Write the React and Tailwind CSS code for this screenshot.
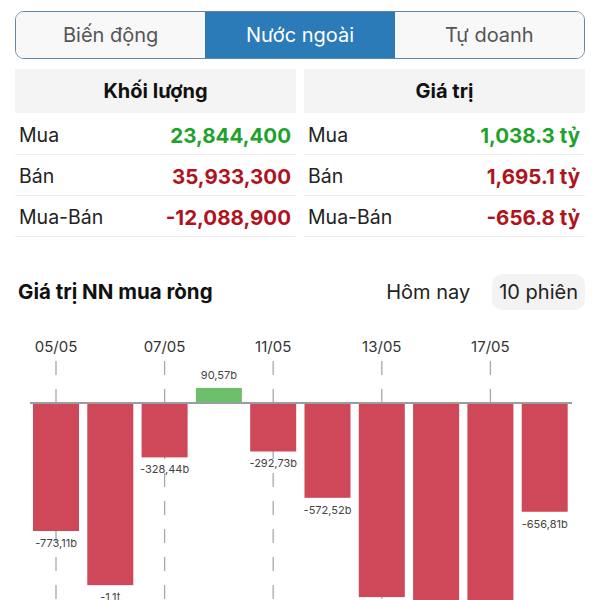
import { useState } from "react";

const tabs = ["Biến động", "Nước ngoài", "Tự doanh"];

const volumeRows = [
    { label: "Mua", value: "23,844,400", up: true },
    { label: "Bán", value: "35,933,300", up: false },
    { label: "Mua-Bán", value: "-12,088,900", up: false },
];

const valueRows = [
    { label: "Mua", value: "1,038.3 tỷ", up: true },
    { label: "Bán", value: "1,695.1 tỷ", up: false },
    { label: "Mua-Bán", value: "-656.8 tỷ", up: false },
];

const sessions = [
    { date: "05/05", v: -773.11, label: "-773,11b" },
    { date: "", v: -1100, label: "-1,1t" },
    { date: "07/05", v: -328.44, label: "-328,44b" },
    { date: "", v: 90.57, label: "90,57b" },
    { date: "11/05", v: -292.73, label: "-292,73b" },
    { date: "", v: -572.52, label: "-572,52b" },
    { date: "13/05", v: -1172, label: "-1,17t" },
    { date: "", v: -1320, label: "-1,32t" },
    { date: "17/05", v: -1290, label: "-1,29t" },
    { date: "", v: -656.81, label: "-656,81b" },
];

const AXIS_Y = 403;
const SCALE = 0.1656;
const BAR_W = 46;
const PITCH = 54.3;

const StatTable = ({ title, rows }) => (
    <div>
        <div className="h-[44px] mb-[1px] bg-[#f4f4f4] flex items-center justify-center text-[20px] font-bold text-[#111]">
            {title}
        </div>
        {rows.map((row) => (
            <div
                key={row.label}
                className="h-[41px] pt-[4px] border-b border-[#ededed] flex items-center justify-between pl-[4px] pr-[5px] text-[19.5px]"
            >
                <span className="text-[#222]">{row.label}</span>
                <span className={`text-[20.5px] font-bold ${row.up ? "text-[#1fa22c]" : "text-[#b01320]"}`}>
                    {row.value}
                </span>
            </div>
        ))}
    </div>
);

const NetChart = () => (
    <svg width="600" height="290" viewBox="0 310 600 290" className="block">
        {/* date labels and dashed grid */}
        {sessions.map((s, i) =>
            s.date ? (
                <g key={"g" + i}>
                    <text
                        x={33 + i * PITCH + BAR_W / 2}
                        y={352}
                        textAnchor="middle"
                        fontSize="15"
                        fill="#333"
                    >
                        {s.date}
                    </text>
                    <line
                        x1={33 + i * PITCH + BAR_W / 2}
                        x2={33 + i * PITCH + BAR_W / 2}
                        y1={361}
                        y2={600}
                        stroke="#a9a9a9"
                        strokeWidth="1.3"
                        strokeDasharray="14 14"
                    />
                </g>
            ) : null
        )}

        {sessions.map((s, i) => {
            const x = 33 + i * PITCH;
            const h = Math.abs(s.v) * SCALE;
            const up = s.v > 0;
            const labelY = up ? AXIS_Y - h - 9 : AXIS_Y + h + 16;
            return (
                <g key={"b" + i}>
                    <rect
                        x={x}
                        y={up ? AXIS_Y - h : AXIS_Y}
                        width={BAR_W}
                        height={h}
                        fill={up ? "#6cbf6b" : "#cf4859"}
                    />
                    {labelY < 606 && (
                        <text x={x + BAR_W / 2} y={labelY} textAnchor="middle" fontSize="11" fill="#444">
                            {s.label}
                        </text>
                    )}
                </g>
            );
        })}

        <line x1="30" x2="572" y1={AXIS_Y} y2={AXIS_Y} stroke="#9c9c9c" strokeWidth="2" />
    </svg>
);

const App = () => {
    const [tab, setTab] = useState(1);
    const [range, setRange] = useState("10");

    return (
        <div className="w-[600px] h-[600px] overflow-hidden bg-white font-['Inter',sans-serif]">
            <div className="px-[15px] pt-[11px]">
                {/* Tabs */}
                <div className="flex h-[48px] border border-[#5f87a6] rounded-[9px] overflow-hidden">
                    {tabs.map((t, i) => (
                        <button
                            key={t}
                            onClick={() => setTab(i)}
                            className={`flex-1 text-[20px] ${
                                tab === i ? "bg-[#2b7bb9] text-white" : "bg-[#f8f8f8] text-[#555]"
                            }`}
                        >
                            {t}
                        </button>
                    ))}
                </div>

                {/* Summary tables */}
                <div className="mt-[10px] grid grid-cols-2 gap-x-[8px]">
                    <StatTable title="Khối lượng" rows={volumeRows} />
                    <StatTable title="Giá trị" rows={valueRows} />
                </div>
            </div>

            {/* Chart header */}
            <div className="mt-[37px] h-[36px] flex items-center justify-between pl-[18px] pr-[15px]">
                <h2 className="text-[20.5px] font-bold text-[#111]">Giá trị NN mua ròng</h2>
                <div className="flex items-center gap-[14px] text-[20px] text-[#222]">
                    <button
                        onClick={() => setRange("today")}
                        className={`h-[36px] px-[8px] rounded-[10px] ${range === "today" ? "bg-[#f3f3f3]" : ""}`}
                    >
                        Hôm nay
                    </button>
                    <button
                        onClick={() => setRange("10")}
                        className={`h-[36px] px-[7px] rounded-[10px] ${range === "10" ? "bg-[#f3f3f3]" : ""}`}
                    >
                        10 phiên
                    </button>
                </div>
            </div>

            <NetChart />
        </div>
    );
};

export default App;
